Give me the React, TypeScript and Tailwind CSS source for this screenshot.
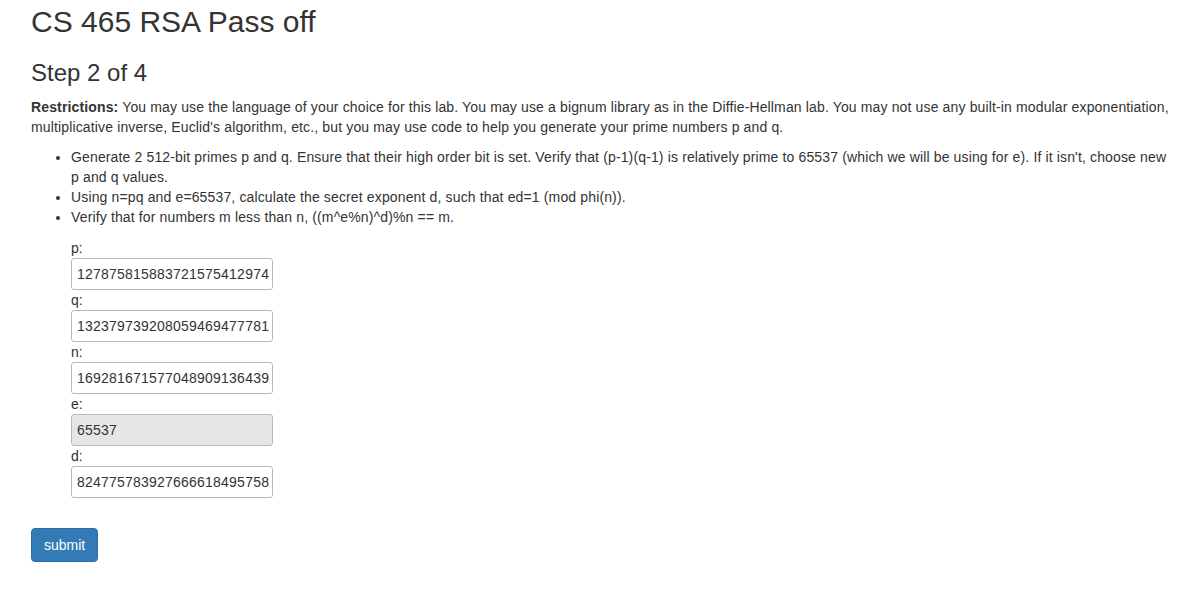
const fields = [
  { name: "p", value: "127875815883721575412974431938125470983521097652390862135098723450987123", readOnly: false },
  { name: "q", value: "132379739208059469477781209387120938712039871203987120398712039871234098", readOnly: false },
  { name: "n", value: "169281671577048909136439098712309871230987123098712309871230987123098712", readOnly: false },
  { name: "e", value: "65537", readOnly: true },
  { name: "d", value: "824775783927666618495758203987120398712039871203987120398712039871230987", readOnly: false },
];

export default function App() {
  return (
    <div
      className="min-h-screen bg-white pl-[31px] pr-[16px] text-[14px] leading-[20px] text-[#333333]"
      style={{ fontFamily: '"Liberation Sans", Arial, Helvetica, sans-serif' }}
    >
      <h1 className="pt-[5px] text-[30px] font-normal leading-[33px]">CS 465 RSA Pass off</h1>
      <h3 className="mt-[22px] text-[24px] font-normal leading-[26px]">Step 2 of 4</h3>

      {/* body copy runs a touch wider than plain Liberation at 14px */}
      <div className="tracking-[0.14px]">
        <p className="mt-[11px] mb-[10px]">
          <strong>Restrictions:</strong> You may use the language of your choice for this lab. You may use a bignum
          library as in the Diffie-Hellman lab. You may not use any built-in modular exponentiation, multiplicative
          inverse, Euclid's algorithm, etc., but you may use code to help you generate your prime numbers p and q.
        </p>

        <ul className="mb-[10px] list-disc pl-[40px]">
          <li>
            Generate 2 512-bit primes p and q. Ensure that their high order bit is set. Verify that (p-1)(q-1) is
            relatively prime to 65537 (which we will be using for e). If it isn't, choose new p and q values.
          </li>
          <li>Using n=pq and e=65537, calculate the secret exponent d, such that ed=1 (mod phi(n)).</li>
          <li>Verify that for numbers m less than n, ((m^e%n)^d)%n == m.</li>
        </ul>
      </div>

      <form className="pt-[1px]" onSubmit={(ev) => ev.preventDefault()}>
        <div className="pl-[40px]">
          {fields.map((f) => (
            <div key={f.name}>
              <label className="block leading-[20px]">{f.name}:</label>
              <input
                type="text"
                readOnly
                defaultValue={f.value}
                className={`block h-[32px] w-[202px] rounded-[3px] border border-[#b8b8b8] pl-[5px] pr-[3px] text-[14px] tracking-[0.22px] text-[#333333] outline-none ${
                  f.readOnly ? "bg-[#e6e6e6]" : "bg-white"
                }`}
              />
            </div>
          ))}
        </div>

        <button
          type="submit"
          className="mt-[30px] h-[34px] rounded-[4px] border border-[#2e6da4] bg-[#337ab7] px-[12px] text-[14px] leading-[20px] text-white"
        >
          submit
        </button>
      </form>
    </div>
  );
}
